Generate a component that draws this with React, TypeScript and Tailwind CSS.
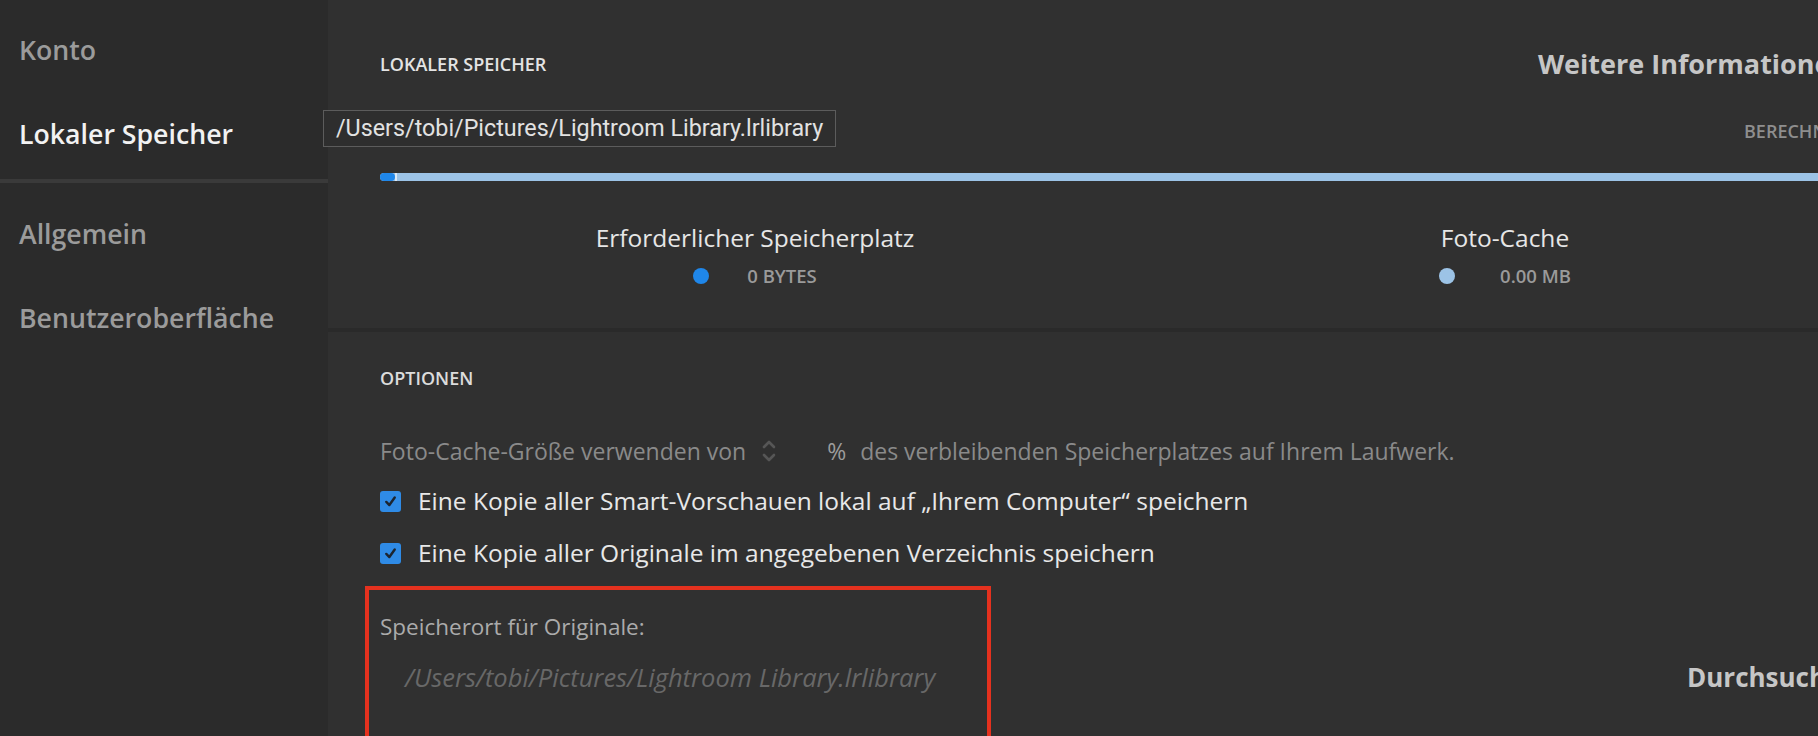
import React from "react";

const font = { fontFamily: '"Open Sans", "Noto Sans", sans-serif' };

const Check = () => (
  <span className="flex h-[21px] w-[21px] shrink-0 items-center justify-center rounded-[3px] bg-[#2f8be6]">
    <svg width="15" height="15" viewBox="0 0 16 16" fill="none">
      <path d="M3.5 8.5 L6.8 11.8 L12.5 3.8" stroke="#1c2530" strokeWidth="2.6" strokeLinecap="round" strokeLinejoin="round" />
    </svg>
  </span>
);

const Stepper = () => (
  <svg width="16" height="26" viewBox="0 0 16 26" fill="none" className="shrink-0">
    <path d="M3 9 L8 4 L13 9" stroke="#565656" strokeWidth="2.6" strokeLinecap="round" strokeLinejoin="round" />
    <path d="M3 17 L8 22 L13 17" stroke="#565656" strokeWidth="2.6" strokeLinecap="round" strokeLinejoin="round" />
  </svg>
);

const navItems = [
  { label: "Konto", active: false },
  { label: "Lokaler Speicher", active: true },
];
const navItems2 = ["Allgemein", "Benutzeroberfläche"];

const App = () => {
  return (
    <div
      className="relative flex h-[736px] w-[1818px] overflow-hidden bg-[#303030]"
      style={font}
    >
      {/* sidebar */}
      <div className="flex w-[328px] shrink-0 flex-col bg-[#2b2b2b] pt-2">
        {navItems.map((n) => (
          <div
            key={n.label}
            className={
              n.active
                ? "flex h-[84px] items-center px-[19px] text-[26.7px] font-semibold text-[#f2f2f2]"
                : "flex h-[84px] items-center px-[19px] text-[26.7px] font-semibold text-[#9b9b9b]"
            }
          >
            {n.label}
          </div>
        ))}
        <div className="mt-[3px] h-[4px] w-full bg-[#3a3a3a]" />
        <div className="mt-[9px]">
          {navItems2.map((l) => (
            <div
              key={l}
              className="flex h-[84px] items-center px-[19px] text-[26.7px] font-semibold text-[#9b9b9b]"
            >
              {l}
            </div>
          ))}
        </div>
      </div>

      {/* main */}
      <div className="relative min-w-0 flex-1 overflow-hidden">
        <div className="h-[328px] pl-[52px] pt-[50px]">
          <div className="flex h-[28px] items-center whitespace-nowrap">
            <span className="w-[1158px] shrink-0 text-[18px] font-semibold text-[#e4e4e4]">
              LOKALER SPEICHER
            </span>
            <span className="text-[27px] font-bold text-[#c6c6c6]">
              Weitere Informationen
            </span>
          </div>
          <div className="mt-[41px] flex h-[24px] items-center whitespace-nowrap pl-[1364px] text-[18px] font-semibold text-[#8e8e8e]">
            BERECHNUNG LÄUFT
          </div>
          <div className="mt-[30px] flex h-[8px] w-[2400px] items-center rounded-full bg-[#9cc3e6]">
            <div className="h-[8px] w-[15px] rounded-full bg-[#1f87ea]" />
            <div className="h-[8px] w-[2px] bg-[#dce9f5]" />
          </div>
          <div className="mt-[41px] flex whitespace-nowrap">
            <div className="flex w-[750px] shrink-0 flex-col items-center">
              <div className="flex h-[32px] items-center text-[24.5px] text-[#e6e6e6]">
                Erforderlicher Speicherplatz
              </div>
              <div className="mt-[10px] flex h-[24px] items-center">
                <span className="h-[16px] w-[16px] rounded-full bg-[#1f87ea]" />
                <span className="ml-[38px] text-[18.5px] font-semibold text-[#9a9a9a]">
                  0 BYTES
                </span>
              </div>
            </div>
            <div className="flex w-[750px] shrink-0 flex-col items-center">
              <div className="flex h-[32px] items-center text-[24.5px] text-[#e6e6e6]">
                Foto-Cache
              </div>
              <div className="mt-[10px] flex h-[24px] items-center">
                <span className="h-[16px] w-[16px] rounded-full bg-[#9cc3e6]" />
                <span className="ml-[45px] text-[18.5px] font-semibold text-[#9a9a9a]">
                  0.00 MB
                </span>
              </div>
            </div>
          </div>
        </div>

        <div className="h-[4px] w-full bg-[#2a2a2a]" />

        <div className="pl-[52px] pt-[34px]">
          <div className="flex h-[24px] items-center text-[18px] font-semibold text-[#dcdcdc]">
            OPTIONEN
          </div>
          <div className="mt-[45px] flex h-[32px] items-center whitespace-nowrap text-[23px] text-[#8a8a8a]">
            <span>Foto-Cache-Größe verwenden von</span>
            <span className="ml-[15px]">
              <Stepper />
            </span>
            <span className="ml-[50px] text-[#9c9c9c]">%</span>
            <span className="ml-[14px]">
              des verbleibenden Speicherplatzes auf Ihrem Laufwerk.
            </span>
          </div>
          <div className="mt-[18px] flex h-[32px] items-center gap-[17px] whitespace-nowrap text-[24.5px] text-[#e8e8e8]">
            <Check />
            <span>Eine Kopie aller Smart-Vorschauen lokal auf „Ihrem Computer“ speichern</span>
          </div>
          <div className="mt-[20px] flex h-[32px] items-center gap-[17px] whitespace-nowrap text-[24.5px] text-[#e8e8e8]">
            <Check />
            <span>Eine Kopie aller Originale im angegebenen Verzeichnis speichern</span>
          </div>
          <div className="mt-[43px] flex h-[30px] items-center text-[22.5px] text-[#ababab]">
            Speicherort für Originale:
          </div>
          <div className="mt-[19px] flex h-[32px] items-center whitespace-nowrap">
            <span className="w-[1307px] shrink-0 pl-[25px] text-[25.5px] italic text-[#686868]">
              /Users/tobi/Pictures/Lightroom Library.lrlibrary
            </span>
            <span className="text-[26px] font-bold text-[#c6c6c6]">Durchsuchen</span>
          </div>
        </div>

        {/* annotation box */}
        <div className="absolute left-[37px] top-[586px] h-[200px] w-[626px] border-4 border-[#e5311e]" />
      </div>

      {/* tooltip */}
      <div
        className="absolute left-[323px] top-[110px] flex h-[37px] w-[513px] items-center border border-[#5c5c5c] bg-[#2e2e2e] pl-[12px] text-[23.3px] text-[#e2e2e2]"
        style={{ fontFamily: 'Roboto, "Liberation Sans", sans-serif' }}
      >
        /Users/tobi/Pictures/Lightroom Library.lrlibrary
      </div>
    </div>
  );
};

export default App;
